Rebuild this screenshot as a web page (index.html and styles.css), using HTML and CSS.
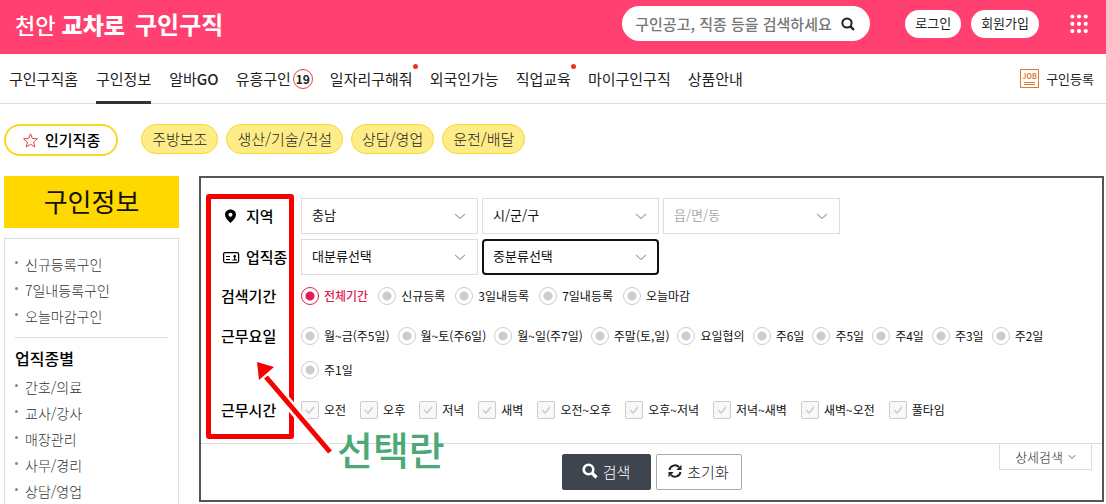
FILE: index.html
```
<!DOCTYPE html>
<html lang="ko">

<head>
    <meta charset="utf-8">
    <title>천안 교차로 구인구직</title>
    <link rel="stylesheet" href="styles.css">
</head>

<body>

    <header class="header">
        <a href="#" class="logo">
            <span class="logo-city">천안</span>
            <span class="logo-name">교차로</span>
            <span class="logo-job">구인구직</span>
        </a>
        <form class="search">
            <input type="text" placeholder="구인공고, 직종 등을 검색하세요" aria-label="검색어">
            <button type="button" aria-label="검색">
                <svg width="14" height="14" viewBox="0 0 14 14" fill="none" stroke="#222" stroke-width="2">
                    <circle cx="6" cy="6" r="4.6" />
                    <path d="M9.3 9.3L13 13" stroke-width="2.4" />
                </svg>
            </button>
        </form>
        <div class="member">
            <a href="#">로그인</a>
            <a href="#">회원가입</a>
        </div>
        <button type="button" class="all-menu" aria-label="전체메뉴">
            <svg width="18" height="20" viewBox="0 0 18 20" fill="#fff">
                <circle cx="2.3" cy="2.5" r="2.1" /><circle cx="9" cy="2.5" r="2.1" /><circle cx="15.7" cy="2.5" r="2.1" />
                <circle cx="2.3" cy="9.8" r="2.1" /><circle cx="9" cy="9.8" r="2.1" /><circle cx="15.7" cy="9.8" r="2.1" />
                <circle cx="2.3" cy="17.1" r="2.1" /><circle cx="9" cy="17.1" r="2.1" /><circle cx="15.7" cy="17.1" r="2.1" />
            </svg>
        </button>
    </header>

    <nav class="nav">
        <ul>
            <li><a href="#">구인구직홈</a></li>
            <li><a href="#" class="active">구인정보</a></li>
            <li><a href="#">알바<b>GO</b></a></li>
            <li><a href="#">유흥구인<span class="adult">19</span></a></li>
            <li><a href="#" class="new">일자리구해줘</a></li>
            <li><a href="#">외국인가능</a></li>
            <li><a href="#" class="new">직업교육</a></li>
            <li><a href="#">마이구인구직</a></li>
            <li><a href="#">상품안내</a></li>
        </ul>
        <a href="#" class="regist">
            <span class="job-icon">JOB</span>
            구인등록
        </a>
    </nav>

    <div class="popular">
        <strong class="popular-title">
            <svg width="15" height="15" viewBox="0 0 15 15" fill="none" stroke="#e8413c" stroke-linejoin="round">
                <path d="M7.5 .8L9.4 5.4L14.4 5.8L10.6 9L11.8 13.9L7.5 11.3L3.2 13.9L4.4 9L.6 5.8L5.6 5.4Z" />
            </svg>
            인기직종
        </strong>
        <a href="#">주방보조</a>
        <a href="#">생산/기술/건설</a>
        <a href="#">상담/영업</a>
        <a href="#">운전/배달</a>
    </div>

    <div class="wrapper">
        <aside class="sidebar">
            <h2>구인정보</h2>
            <div class="side-box">
                <ul>
                    <li><a href="#">신규등록구인</a></li>
                    <li><a href="#">7일내등록구인</a></li>
                    <li><a href="#">오늘마감구인</a></li>
                </ul>
                <h3>업직종별</h3>
                <ul>
                    <li><a href="#">간호/의료</a></li>
                    <li><a href="#">교사/강사</a></li>
                    <li><a href="#">매장관리</a></li>
                    <li><a href="#">사무/경리</a></li>
                    <li><a href="#">상담/영업</a></li>
                </ul>
            </div>
        </aside>

        <form class="panel">
            <div class="row select-row">
                <span class="row-label">
                    <svg width="20" height="16" viewBox="0 0 20 16">
                        <path fill="#000" fill-rule="evenodd" d="M9.5 1.5C6.2 1.5 4 3.9 4 6.8C4 9.8 6.8 12.2 9.5 15C12.2 12.2 15 9.8 15 6.8C15 3.9 12.8 1.5 9.5 1.5ZM9.5 4.8A2 2 0 1 1 9.5 8.8A2 2 0 1 1 9.5 4.8Z" />
                    </svg>
                    지역
                </span>
                <div class="selects">
                    <select aria-label="시/도">
                        <option>충남</option>
                    </select>
                    <select aria-label="시/군/구">
                        <option>시/군/구</option>
                    </select>
                    <select aria-label="읍/면/동" disabled>
                        <option>읍/면/동</option>
                    </select>
                </div>
            </div>
            <div class="row select-row">
                <span class="row-label">
                    <svg width="20" height="16" viewBox="0 0 20 16" fill="none" stroke="#000">
                        <rect x="2.6" y="3.6" width="15" height="10" rx="1.5" stroke-width="1.3" />
                        <path d="M5 7.5H9M5 10.5H9M11.5 11H16M13.7 6V11" stroke-width="1.2" />
                        <circle cx="13.7" cy="7.3" r="1.2" fill="#000" stroke="none" />
                    </svg>
                    업직종
                </span>
                <div class="selects">
                    <select aria-label="대분류">
                        <option>대분류선택</option>
                    </select>
                    <select aria-label="중분류" class="focused">
                        <option>중분류선택</option>
                    </select>
                </div>
            </div>
            <div class="row" role="group" aria-labelledby="period">
                <span class="row-label" id="period">검색기간</span>
                <div class="options">
                    <label><input type="radio" name="period" checked><span>전체기간</span></label>
                    <label><input type="radio" name="period"><span>신규등록</span></label>
                    <label><input type="radio" name="period"><span>3일내등록</span></label>
                    <label><input type="radio" name="period"><span>7일내등록</span></label>
                    <label><input type="radio" name="period"><span>오늘마감</span></label>
                </div>
            </div>
            <div class="row" role="group" aria-labelledby="days">
                <span class="row-label" id="days">근무요일</span>
                <div class="options days">
                    <label><input type="radio" name="days"><span>월~금(주5일)</span></label>
                    <label><input type="radio" name="days"><span>월~토(주6일)</span></label>
                    <label><input type="radio" name="days"><span>월~일(주7일)</span></label>
                    <label><input type="radio" name="days"><span>주말(토,일)</span></label>
                    <label><input type="radio" name="days"><span>요일협의</span></label>
                    <label><input type="radio" name="days"><span>주6일</span></label>
                    <label><input type="radio" name="days"><span>주5일</span></label>
                    <label><input type="radio" name="days"><span>주4일</span></label>
                    <label><input type="radio" name="days"><span>주3일</span></label>
                    <label><input type="radio" name="days"><span>주2일</span></label>
                    <label><input type="radio" name="days"><span>주1일</span></label>
                </div>
            </div>
            <div class="row" role="group" aria-labelledby="hours">
                <span class="row-label" id="hours">근무시간</span>
                <div class="options checks">
                    <label><input type="checkbox"><span>오전</span></label>
                    <label><input type="checkbox"><span>오후</span></label>
                    <label><input type="checkbox"><span>저녁</span></label>
                    <label><input type="checkbox"><span>새벽</span></label>
                    <label><input type="checkbox"><span>오전~오후</span></label>
                    <label><input type="checkbox"><span>오후~저녁</span></label>
                    <label><input type="checkbox"><span>저녁~새벽</span></label>
                    <label><input type="checkbox"><span>새벽~오전</span></label>
                    <label><input type="checkbox"><span>풀타임</span></label>
                </div>
            </div>

            <div class="panel-foot">
                <div class="buttons">
                    <button type="button" class="btn-search">
                        <svg width="16" height="16" viewBox="0 0 16 16" fill="none" stroke="#fff">
                            <circle cx="6.5" cy="6.5" r="4.8" stroke-width="2.6" />
                            <path d="M10 10L14.5 14.5" stroke-width="3.2" />
                        </svg>
                        검색
                    </button>
                    <button type="button" class="btn-reset">
                        <svg width="14" height="14" viewBox="0 0 14 14" fill="none" stroke="#222" stroke-width="2">
                            <path d="M1.5 6A5.5 5.5 0 0 1 11 3.2M12.5 8A5.5 5.5 0 0 1 3 10.8" />
                            <path d="M13.5 .8V6H8.3ZM.5 13.2V8H5.7Z" fill="#222" stroke="none" />
                        </svg>
                        초기화
                    </button>
                </div>
                <button type="button" class="btn-detail">
                    상세검색
                    <svg width="8" height="6" viewBox="0 0 8 6" fill="none" stroke="#666">
                        <path d="M.8 1.2L4 4.4L7.2 1.2" />
                    </svg>
                </button>
            </div>

            <!-- guide marks over the filter labels -->
            <div class="mark-box"></div>
            <svg class="mark-arrow" width="84" height="100" viewBox="0 0 84 100">
                <path d="M24 31L78 94" stroke="#fff" stroke-width="10" />
                <path d="M14 19L78 94" stroke="#f80000" stroke-width="5" />
                <path d="M5 4L22 9L7 22Z" fill="#f80000" />
            </svg>
            <span class="mark-text">선택란</span>
        </form>
    </div>

</body>

</html>
```

FILE: styles.css
```
* {
    list-style: none;
    text-decoration: none;
    margin: 0;
    padding: 0;
    box-sizing: border-box;
    font-family: 'Noto Sans CJK KR', sans-serif;
}

body {
    display: flex;
    flex-direction: column;
    height: 100vh;
    overflow: hidden;
    background: #fff;
    color: #222;
    font-size: 13px;
    line-height: 18px;
}

a {
    color: inherit;
}

button {
    border: 0;
    background: none;
    color: inherit;
    cursor: pointer;
}

svg {
    flex: none;
}

/* header */
.header {
    display: flex;
    flex: none;
    align-items: center;
    height: 54px;
    padding: 0 18px 7px 15px;
    background: #ff4070;
}

.logo {
    display: flex;
    align-items: center;
    margin-right: auto;
    color: #fff;
    font-weight: bold;
    line-height: 30px;
}

.logo-city {
    font-size: 22px;
    font-weight: 500;
}

.logo-name {
    margin: 0 10px 0 6px;
    font-size: 23px;
    font-weight: 900;
}

.logo-job {
    font-size: 24px;
}

.search {
    display: flex;
    align-items: center;
    width: 248px;
    height: 35px;
    margin-right: 35px;
    padding: 0 15px 0 13px;
    border-radius: 18px;
    background: #fff;
}

.search input {
    flex: 1;
    min-width: 0;
    border: 0;
    outline: none;
    font-size: 15px;
    font-weight: 500;
}

.search input::placeholder {
    color: #777;
}

.search button {
    display: flex;
}

.member {
    display: flex;
    gap: 10px;
    margin-right: 31px;
}

.member a {
    padding: 4px 10px 6px;
    border-radius: 14px;
    background: #fff;
}

.all-menu {
    display: flex;
}

/* top menu */
.nav {
    display: flex;
    flex: none;
    justify-content: space-between;
    height: 50px;
    padding: 0 12px 0 9px;
    border-bottom: 1px solid #ddd;
}

.nav ul {
    display: flex;
    gap: 17px;
}

.nav li a {
    display: flex;
    align-items: center;
    position: relative;
    height: 50px;
    font-size: 15px;
}

.nav li a.active {
    margin: 0 1px;
    border-top: 3px solid transparent;
    border-bottom: 3px solid #333;
}

.nav li a.new::after {
    content: "";
    position: absolute;
    top: 10px;
    right: -5px;
    width: 5px;
    height: 5px;
    border-radius: 50%;
    background: #f03020;
}

.nav b {
    font-weight: 500;
}

.adult {
    width: 20px;
    height: 20px;
    margin-left: 2px;
    border: 1px solid #e8413c;
    border-radius: 50%;
    font-size: 12px;
    font-weight: bold;
    line-height: 18px;
    text-align: center;
}

.regist {
    display: flex;
    align-items: center;
    gap: 7px;
}

.job-icon {
    width: 19px;
    height: 19px;
    border: 1px solid #e07830;
    background: linear-gradient(#e07830, #e07830) center 12px / 11px 1px no-repeat,
        linear-gradient(#e07830, #e07830) center 14px / 11px 1px no-repeat;
    color: #e07830;
    font-size: 7px;
    font-weight: bold;
    line-height: 12px;
    text-align: center;
}

/* popular jobs */
.popular {
    display: flex;
    flex: none;
    gap: 8px;
    padding: 20px 4px;
}

.popular a {
    height: 30px;
    padding: 0 10px;
    border: 1px solid #f5d92b;
    border-radius: 15px;
    background: #feec88;
    font-size: 15px;
    font-weight: 300;
    line-height: 28px;
}

.popular-title {
    display: flex;
    align-items: center;
    gap: 7px;
    height: 32px;
    margin-right: 15px;
    padding: 0 16px 0 17px;
    border: 2px solid #f8d823;
    border-radius: 16px;
    color: #000;
    font-size: 15px;
    font-weight: 500;
}

.wrapper {
    display: flex;
    flex: 1;
    align-items: flex-start;
    gap: 20px;
    min-height: 0;
    padding: 0 2px 0 4px;
}

/* sidebar */
.sidebar {
    display: flex;
    flex: none;
    flex-direction: column;
    align-self: stretch;
    width: 175px;
}

.sidebar h2 {
    height: 52px;
    margin-bottom: 10px;
    background: #ffd800;
    color: #111;
    font-size: 26px;
    font-weight: 400;
    line-height: 50px;
    text-align: center;
}

.side-box {
    flex: 1;
    padding: 12px 10px 0;
    border: 1px solid #ddd;
    border-bottom: 0;
}

.side-box li {
    display: flex;
    align-items: center;
    gap: 7px;
    height: 26px;
    color: #333;
    font-size: 14px;
    font-weight: 300;
}

.side-box li::before {
    content: "";
    width: 3px;
    height: 3px;
    margin-bottom: 4px;
    border-radius: 50%;
    background: #888;
}

.side-box h3 {
    margin-top: 8px;
    padding: 8px 0 4px;
    border-top: 1px solid #ddd;
    color: #000;
    font-size: 16px;
    font-weight: 500;
    line-height: 24px;
}

/* search panel */
.panel {
    flex: 1;
    position: relative;
    min-width: 0;
    padding-top: 20px;
    border: 2px solid #555;
}

.row {
    display: flex;
    margin: 0 20px 22px;
}

.select-row {
    align-items: center;
    margin-bottom: 5px;
}

.select-row + .row:not(.select-row) {
    margin-top: 12px;
}

.row-label {
    display: flex;
    flex: none;
    align-items: center;
    gap: 5px;
    width: 80px;
    height: 18px;
    color: #000;
    font-size: 15px;
    font-weight: 500;
    white-space: nowrap;
}

.selects {
    display: flex;
    gap: 4px;
}

select {
    appearance: none;
    width: 177px;
    height: 36px;
    padding: 0 10px 3px;
    border: 1px solid #ddd;
    border-radius: 0;
    background: #fff url("data:image/svg+xml,%3Csvg xmlns='http://www.w3.org/2000/svg' width='12' height='7' fill='none' stroke='%23aaa' stroke-width='1.2'%3E%3Cpath d='M1 1L6 5.5L11 1'/%3E%3C/svg%3E") right 11px center no-repeat;
    color: #111;
    font-size: 13px;
}

select:disabled {
    color: #aaa;
    opacity: 1;
}

select.focused {
    padding: 0 9px 3px;
    border: 2px solid #111;
    border-radius: 4px;
    background-position: right 10px center;
}

.options {
    display: flex;
    flex-wrap: wrap;
    gap: 16px 10px;
}

.options label {
    display: flex;
    align-items: center;
    gap: 5px;
    color: #111;
    font-size: 12px;
}

.options input {
    appearance: none;
    width: 18px;
    height: 18px;
    border: 1px solid #ccc;
}

.options input[type="radio"] {
    border-radius: 50%;
    background: radial-gradient(circle, #ccc 4px, #fff 5px);
}

.options input[type="radio"]:checked {
    border-color: #e31b54;
    background: radial-gradient(circle, #e31b54 4px, #fff 5px);
}

.options input:checked + span {
    color: #e31b54;
    font-weight: 500;
}

.days {
    column-gap: 8px;
}

.checks {
    column-gap: 14px;
}

.options input[type="checkbox"] {
    border-radius: 2px;
    background: #f8f8f8 url("data:image/svg+xml,%3Csvg xmlns='http://www.w3.org/2000/svg' width='10' height='8' fill='none' stroke='%23ccc' stroke-width='1.5'%3E%3Cpath d='M1 4L4 7L9 1'/%3E%3C/svg%3E") center no-repeat;
}

.panel-foot {
    display: grid;
    grid-template-columns: 1fr auto 1fr;
    align-items: start;
    margin-top: 24px;
    padding: 0 10px;
    border-top: 1px solid #ddd;
}

.buttons {
    display: flex;
    grid-column: 2;
    gap: 5px;
    padding: 10px 0;
}

.buttons button {
    display: flex;
    align-items: center;
    justify-content: center;
    gap: 5px;
    height: 36px;
    padding-bottom: 2px;
    border: 1px solid #aaa;
    border-radius: 2px;
    font-size: 15px;
    font-weight: 300;
}

.buttons .btn-search {
    width: 89px;
    border-color: #3e454f;
    background: #3e454f;
    color: #fff;
}

.buttons .btn-reset {
    width: 86px;
}

.btn-detail {
    display: flex;
    align-items: center;
    justify-self: end;
    gap: 5px;
    height: 26px;
    padding: 0 15px;
    border: 1px solid #ddd;
    border-top: 0;
    font-size: 13px;
    font-weight: 300;
}

.mark-box {
    position: absolute;
    top: 16px;
    left: 5px;
    width: 88px;
    height: 245px;
    border: 5px solid #f80000;
    border-radius: 3px;
    pointer-events: none;
}

.mark-arrow {
    position: absolute;
    top: 180px;
    left: 51px;
    pointer-events: none;
}

.mark-text {
    position: absolute;
    top: 248px;
    left: 136px;
    color: #4ca977;
    font-size: 39px;
    font-weight: 500;
    line-height: 44px;
}
```
